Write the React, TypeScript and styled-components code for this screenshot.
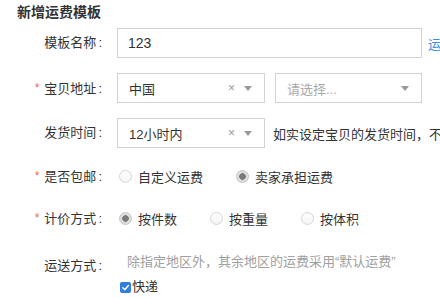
import styled, { createGlobalStyle } from "styled-components";

const GlobalStyle = createGlobalStyle`
  html, body {
    margin: 0;
    padding: 0;
    background: #fff;
  }
  body {
    font-family: "Liberation Sans", "Noto Sans CJK SC", sans-serif;
    color: #333;
  }
`;

const Page = styled.div`
  width: 440px;
  height: 298px;
  overflow: hidden;
  padding-top: 3px;
  box-sizing: border-box;
`;

const Title = styled.h2`
  margin: 0 0 7px 17px;
  font-size: 14px;
  line-height: 18px;
  font-weight: 700;
  color: #333;
`;

const Form = styled.div`
  display: flex;
  flex-direction: column;
  gap: 15px;
`;

const Row = styled.div<{ $h?: number; $top?: boolean }>`
  display: flex;
  align-items: ${(p) => (p.$top ? "flex-start" : "center")};
  height: ${(p) => (p.$h ? p.$h + "px" : "auto")};
  white-space: nowrap;
`;

const Label = styled.div<{ $pt?: number }>`
  width: 102px;
  flex-shrink: 0;
  margin-right: 15px;
  text-align: right;
  font-size: 13px;
  line-height: 20px;
  color: #333;
  padding-top: ${(p) => p.$pt ?? 0}px;
`;

const Star = styled.span`
  color: #e46a6a;
  font-size: 12px;
  margin-right: 5px;
  vertical-align: 1px;
`;

const Colon = styled.span`
  margin-left: 2px;
`;

const TextInput = styled.div`
  width: 305px;
  height: 30px;
  box-sizing: border-box;
  flex-shrink: 0;
  border: 1px solid #d2d2d2;
  padding: 0 10px;
  display: flex;
  align-items: center;
  font-size: 14px;
  color: #333;
`;

const Link = styled.a`
  margin-left: 6px;
  font-size: 13px;
  color: #3a8ee6;
  text-decoration: none;
`;

const Select = styled.div<{ $w: number; $ml?: number }>`
  width: ${(p) => p.$w}px;
  margin-left: ${(p) => p.$ml ?? 0}px;
  height: 30px;
  box-sizing: border-box;
  flex-shrink: 0;
  border: 1px solid #d2d2d2;
  padding: 0 12px 0 11px;
  display: flex;
  align-items: center;
  font-size: 13px;
  color: #333;
`;

const Value = styled.span<{ $placeholder?: boolean }>`
  flex: 1;
  color: ${(p) => (p.$placeholder ? "#aaa" : "#333")};
`;

const Clear = styled.span`
  color: #999;
  font-size: 12px;
  margin-right: 9px;
`;

const Arrow = styled.span`
  width: 0;
  height: 0;
  border-left: 4px solid transparent;
  border-right: 4px solid transparent;
  border-top: 5px solid #999;
`;

const Hint = styled.span`
  margin-left: 8px;
  font-size: 13px;
  color: #333;
`;

const Options = styled.div`
  display: flex;
  align-items: center;
  gap: 33px;
  margin-left: 2px;
`;

const Option = styled.label`
  display: flex;
  align-items: center;
  gap: 6px;
  font-size: 13px;
  color: #333;
`;

const Radio = styled.span<{ $on?: boolean }>`
  width: 13px;
  height: 13px;
  box-sizing: border-box;
  border-radius: 50%;
  border: 1px solid ${(p) => (p.$on ? "#c4c4c4" : "#d6d6d6")};
  background: ${(p) =>
    p.$on
      ? "radial-gradient(circle, #7a7a7a 0 3px, #d8d8d8 3.5px, #ececec 100%)"
      : "linear-gradient(#fff, #f4f4f4)"};
`;

const Shipping = styled.div`
  display: flex;
  flex-direction: column;
  padding-top: 6px;
`;

const GrayNote = styled.div`
  padding-left: 10px;
  font-size: 13px;
  line-height: 18px;
  color: #a0a0a0;
`;

const CheckRow = styled.label`
  display: flex;
  align-items: center;
  gap: 1px;
  margin: 7px 0 0 3px;
  font-size: 13px;
  line-height: 18px;
  color: #333;
`;

const CheckBox = styled.span`
  width: 11px;
  height: 11px;
  border-radius: 2px;
  background: #2f7de1;
  display: flex;
  align-items: center;
  justify-content: center;
`;

export default function App() {
  return (
    <Page>
      <GlobalStyle />
      <Title>新增运费模板</Title>
      <Form>
        <Row $h={30}>
          <Label>
            模板名称<Colon>:</Colon>
          </Label>
          <TextInput>123</TextInput>
          <Link href="#">运费计算器</Link>
        </Row>
        <Row $h={30}>
          <Label>
            <Star>*</Star>宝贝地址<Colon>:</Colon>
          </Label>
          <Select $w={148}>
            <Value>中国</Value>
            <Clear>×</Clear>
            <Arrow />
          </Select>
          <Select $w={147} $ml={10}>
            <Value $placeholder>请选择...</Value>
            <Arrow />
          </Select>
        </Row>
        <Row $h={30}>
          <Label>
            发货时间<Colon>:</Colon>
          </Label>
          <Select $w={148}>
            <Value>12小时内</Value>
            <Clear>×</Clear>
            <Arrow />
          </Select>
          <Hint>如实设定宝贝的发货时间，不仅可避免发货咨询和纠纷</Hint>
        </Row>
        <Row $h={27}>
          <Label>
            <Star>*</Star>是否包邮<Colon>:</Colon>
          </Label>
          <Options>
            <Option>
              <Radio />
              自定义运费
            </Option>
            <Option>
              <Radio $on />
              卖家承担运费
            </Option>
          </Options>
        </Row>
        <Row $h={27}>
          <Label>
            <Star>*</Star>计价方式<Colon>:</Colon>
          </Label>
          <Options>
            <Option>
              <Radio $on />
              按件数
            </Option>
            <Option>
              <Radio />
              按重量
            </Option>
            <Option>
              <Radio />
              按体积
            </Option>
          </Options>
        </Row>
        <Row $top>
          <Label $pt={9}>
            运送方式<Colon>:</Colon>
          </Label>
          <Shipping>
            <GrayNote>除指定地区外，其余地区的运费采用“默认运费”</GrayNote>
            <CheckRow>
              <CheckBox>
                <svg width="9" height="9" viewBox="0 0 10 10">
                  <path
                    d="M2 5.2 L4.2 7.4 L8.2 2.8"
                    fill="none"
                    stroke="#fff"
                    strokeWidth="1.6"
                    strokeLinecap="round"
                    strokeLinejoin="round"
                  />
                </svg>
              </CheckBox>
              快递
            </CheckRow>
          </Shipping>
        </Row>
      </Form>
    </Page>
  );
}
